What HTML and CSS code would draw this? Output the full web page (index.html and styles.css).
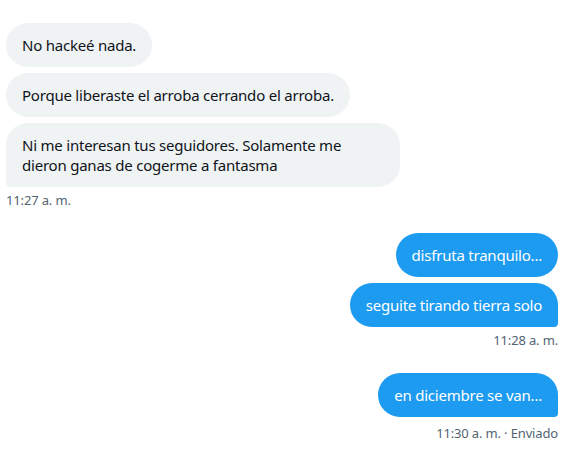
FILE: index.html
```html
<!DOCTYPE html>
<html lang="es">
<head>
<meta charset="utf-8">
<link rel="stylesheet" href="styles.css">
</head>
<body>
<div class="chat">
  <div class="group in">
    <div class="bubble">No hackeé nada.</div>
    <div class="bubble">Porque liberaste el arroba cerrando el arroba.</div>
    <div class="bubble last">Ni me interesan tus seguidores. Solamente me dieron ganas de cogerme a fantasma</div>
    <div class="meta">11:27 a. m.</div>
  </div>
  <div class="group out">
    <div class="bubble">disfruta tranquilo...</div>
    <div class="bubble last">seguite tirando tierra solo</div>
    <div class="meta">11:28 a. m.</div>
  </div>
  <div class="group out">
    <div class="bubble last">en diciembre se van...</div>
    <div class="meta sent">11:30 a. m. · Enviado</div>
  </div>
</div>
</body>
</html>
```
FILE: styles.css
```css
html, body {
  margin: 0;
  padding: 0;
  background: #ffffff;
}
body {
  font-family: "Noto Sans", "Open Sans", sans-serif;
  color: #0f1419;
}
.chat {
  display: flex;
  flex-direction: column;
  gap: 25px;
  padding: 23px 4px 0 6px;
}
.group {
  display: flex;
  flex-direction: column;
  gap: 6px;
}
.group.in {
  align-items: flex-start;
}
.group.out {
  align-items: flex-end;
}
.bubble {
  font-size: 15px;
  line-height: 20px;
  letter-spacing: -0.22px;
  padding: 12px 16px;
  border-radius: 22px;
  max-width: 362px;
  background: #eff3f4;
  color: #0f1419;
}
.in .bubble.last {
  border-bottom-left-radius: 4px;
}
.out .bubble {
  background: #1d9bf0;
  color: #ffffff;
}
.out .bubble.last {
  border-bottom-right-radius: 4px;
}
.meta {
  font-size: 13px;
  line-height: 16px;
  letter-spacing: -0.15px;
  color: #536471;
  margin-top: -1px;
}
.meta.sent {
  margin-top: 2px;
}
```
